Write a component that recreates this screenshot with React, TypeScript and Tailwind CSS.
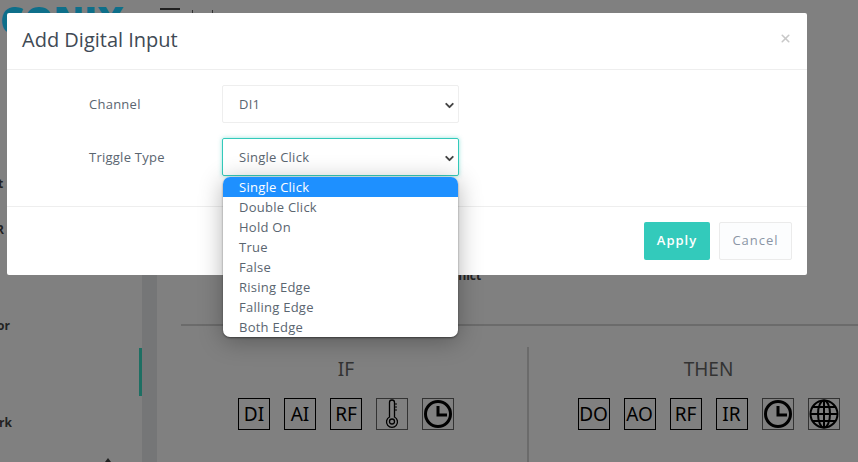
import { ChevronDown, X } from 'lucide-react';

const font = "font-['Open_Sans','Noto_Sans',sans-serif]";

const ifItems = ['DI', 'AI', 'RF'];
const thenItems = ['DO', 'AO', 'RF', 'IR'];
const options = ['Single Click', 'Double Click', 'Hold On', 'True', 'False', 'Rising Edge', 'Falling Edge', 'Both Edge'];

const ClockIcon = () => (
  <svg width="30" height="30" viewBox="0 0 30 30" fill="none" stroke="#000" strokeWidth="3">
    <circle cx="15" cy="15" r="12.5" />
    <path d="M15 7v9h9" />
  </svg>
);

const ThermoIcon = () => (
  <svg width="30" height="30" viewBox="0 0 30 30" fill="none" stroke="#000" strokeWidth="1.3">
    <path d="M12.5 18V3.5a2.5 2.5 0 0 1 5 0V18a5.5 5.5 0 1 1-5 0z" />
    <circle cx="15" cy="22.5" r="2.5" />
    <path d="M18 5h2M18 8h2M18 11h2" strokeWidth="1" />
  </svg>
);

const GlobeIcon = () => (
  <svg width="30" height="30" viewBox="0 0 30 30" fill="none" stroke="#000" strokeWidth="2">
    <circle cx="15" cy="15" r="13.5" />
    <ellipse cx="15" cy="15" rx="6" ry="13.5" />
    <path d="M15 1.5v27M1.5 15h27M3.5 8h23M3.5 22h23" />
  </svg>
);

const Box = ({ children, faded }: { children: React.ReactNode; faded?: boolean }) => (
  <div className={`w-8 h-8 flex items-center justify-center border text-[19px] text-black font-['Noto_Sans',sans-serif] ${faded ? 'border-[#333]' : 'border-black'}`}>
    {children}
  </div>
);

const App = () => {
  return (
    <div className={`relative w-[858px] h-[462px] overflow-hidden bg-[#808080] ${font}`}>
      {/* Page behind the overlay */}
      <div className="flex h-full">
        <aside className="relative w-[142px] shrink-0 text-[12px] font-bold text-[#222]">
          <div className="absolute left-0 top-[1px] text-[37px] leading-none font-extrabold text-[#0e6f8a]">CONIX</div>
          <div className="absolute -left-[2px] top-[175px]">t</div>
          <div className="absolute -left-[4px] top-[221px]">R</div>
          <div className="absolute -left-[3px] top-[317px]">or</div>
          <div className="absolute -left-[1px] top-[414px]">rk</div>
          <div className="absolute right-0 top-[348px] w-[3px] h-[48px] bg-[#1d6f63]" />
          <div className="absolute left-[105px] top-[458px] w-0 h-0 border-x-[3px] border-x-transparent border-b-[4px] border-b-[#222]" />
        </aside>
        <div className="w-[15px] shrink-0 mt-[13px] bg-[#757677]" />
        <main className="flex-1 relative">
          <div className="absolute left-[3px] top-[8px] w-5 border-t-2 border-[#222]" />
          <div className="absolute left-[35px] top-[10px] w-px h-[3px] bg-[#333]" />
          <div className="absolute left-[55px] top-[10px] w-px h-[3px] bg-[#333]" />
          <div className="absolute left-[293px] top-[267px] text-[12px] font-bold text-[#222]">nflict</div>
          <div className="absolute left-[24px] right-0 top-[324px] border-t-2 border-[#6b6b6b]" />
          <div className="absolute left-[24px] right-0 top-[347px] flex">
            <div className="w-[348px] flex flex-col items-center pt-[10px] pr-[16px] border-r-2 border-[#6b6b6b] h-[115px]">
              <div className="text-[19px] leading-6 text-[#333] font-['Noto_Sans',sans-serif]">IF</div>
              <div className="flex gap-[14px] mt-[17px]">
                {ifItems.map((item) => (
                  <Box key={item}>{item}</Box>
                ))}
                <Box faded><ThermoIcon /></Box>
                <Box faded><ClockIcon /></Box>
              </div>
            </div>
            <div className="flex-1 flex flex-col items-center pt-[10px] pl-[30px]">
              <div className="text-[19px] leading-6 text-[#333] font-['Noto_Sans',sans-serif]">THEN</div>
              <div className="flex gap-[14px] mt-[17px]">
                {thenItems.map((item) => (
                  <Box key={item}>{item}</Box>
                ))}
                <Box faded><ClockIcon /></Box>
                <Box faded><GlobeIcon /></Box>
              </div>
            </div>
          </div>
        </main>
      </div>

      {/* Modal */}
      <div className="absolute left-[7px] top-[13px] w-[800px] h-[262px] bg-white rounded-[2px]">
        <div className="h-[57px] flex items-center justify-between pb-[2px] px-[15px] border-b border-[#eeeeee]">
          <h4 className="text-[20px] text-[#3f4a55]">Add Digital Input</h4>
          <X size={13} strokeWidth={3} className="text-[#c8c8c8] mb-[4px]" />
        </div>
        <div className="h-[137px] pt-[15px] border-b border-[#eeeeee]">
          <div className="flex items-center h-[38px] mb-[15px]">
            <label className="w-[215px] pl-[82px] pt-[2px] text-[13px] tracking-[0.25px] text-[#5a6570]">Channel</label>
            <div className="w-[237px] h-[38px] flex items-center justify-between pl-[16px] pr-[2px] pt-[2px] border border-[#eeeeee] rounded-[2px] text-[13px] tracking-[0.25px] text-[#5a6570]">
              DI1
              <ChevronDown size={13} strokeWidth={3.5} className="text-[#444]" />
            </div>
          </div>
          <div className="flex items-center h-[38px]">
            <label className="w-[215px] pl-[82px] pt-[2px] text-[13px] tracking-[0.25px] text-[#5a6570]">Triggle Type</label>
            <div className="w-[237px] h-[38px] flex items-center justify-between pl-[16px] pr-[2px] pt-[2px] border border-[#33cabb] rounded-[2px] shadow-[0_0_4px_rgba(51,202,187,0.5)] text-[13px] tracking-[0.25px] text-[#5a6570]">
              Single Click
              <ChevronDown size={13} strokeWidth={3.5} className="text-[#444]" />
            </div>
          </div>
        </div>
        <div className="flex justify-end gap-[9px] pt-[15px] pr-[15px]">
          <button className="w-[66px] h-[38px] rounded-[2px] bg-[#33cabb] text-[13px] font-semibold tracking-[1px] text-white">Apply</button>
          <button className="w-[73px] h-[38px] rounded-[2px] border border-[#ebebeb] bg-[#fcfdfe] text-[13px] tracking-[1px] text-[#8b95a5]">Cancel</button>
        </div>
      </div>

      {/* Open select list */}
      <ul className="absolute left-[223px] top-[177px] w-[235px] h-[160px] overflow-hidden rounded-[7px] bg-white shadow-[0_1px_2px_rgba(0,0,0,0.45),0_4px_24px_rgba(0,0,0,0.3)] text-[13px] leading-5 tracking-[0.25px] text-[#5a6570]">
        {options.map((opt, i) => (
          <li key={opt} className={`pl-4 h-5 ${i === 0 ? 'bg-[#1e90ff] text-white' : ''}`}>{opt}</li>
        ))}
      </ul>
    </div>
  );
};

export default App;
